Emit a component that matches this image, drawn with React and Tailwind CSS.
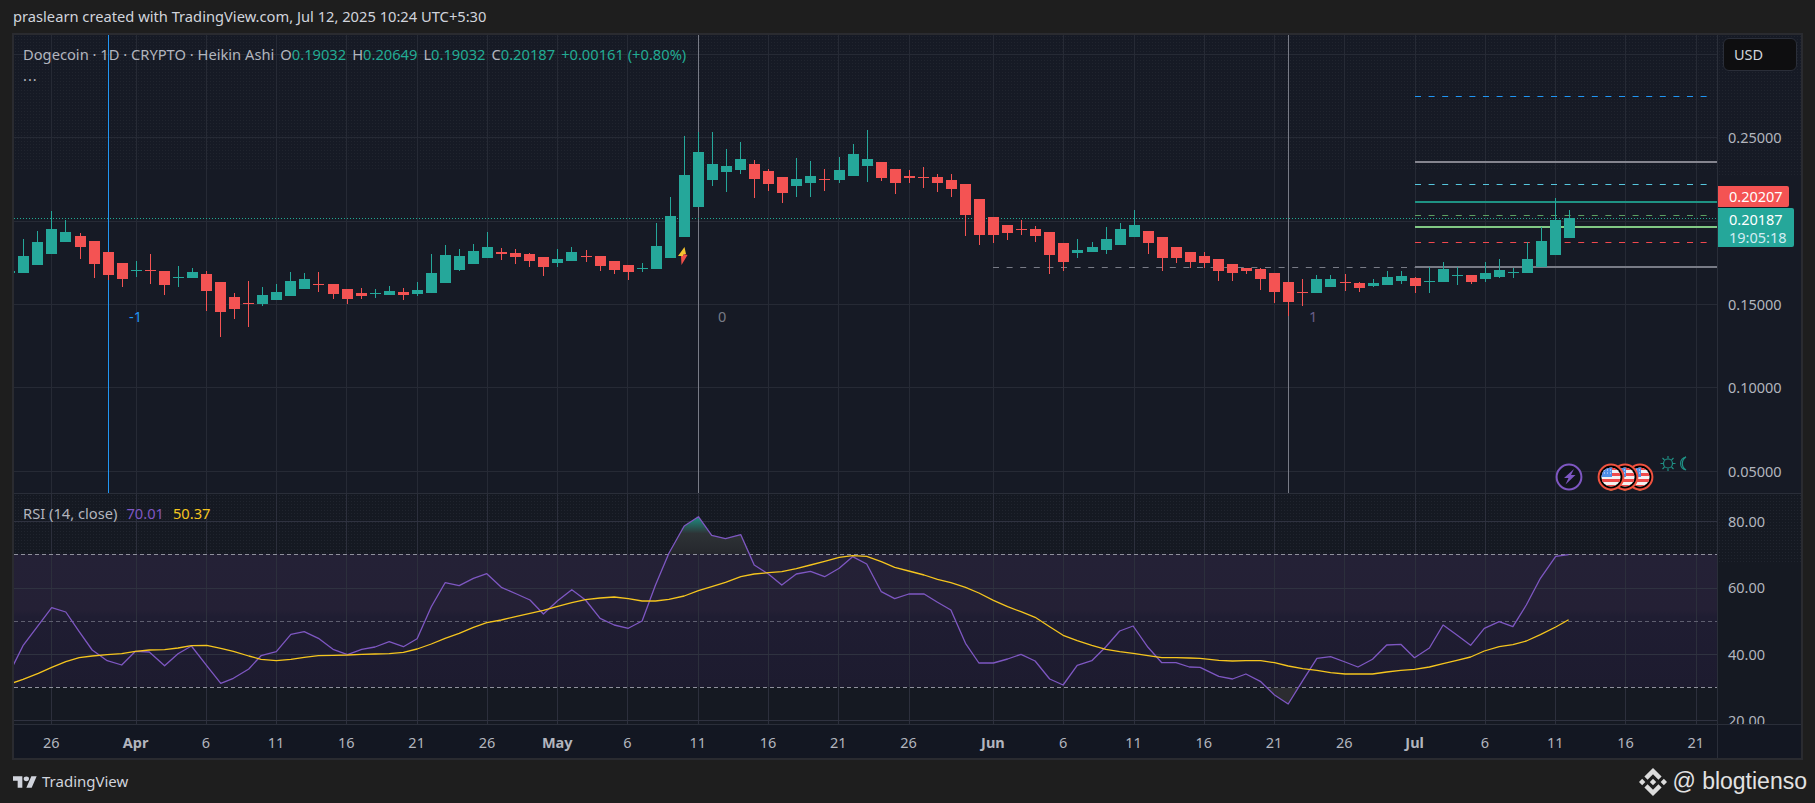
import React from 'react';

// candle rows read off the chart: [center, wickTop, bodyTop, bodyBottom, wickBottom, up]
const segments = [
  { x0: 0, y0: 200, rows: [
    [70,117,168,219,219,1],[112,93,126,195,195,1],[154,33,87,162,162,1],[196,60,96,126,126,1],[241,99,108,141,177,0],
    [283,123,123,192,234,0],[325,156,156,225,240,0],[367,189,189,237,261,0],[409,183,210,213,231,1],[451,162,210,213,252,0],
    [493,213,213,255,285,0],[535,198,231,234,261,1],[577,204,216,234,234,1],[619,213,222,273,333,0],[661,246,246,336,411,0],
    [703,279,291,327,357,0],[745,243,309,312,381,0],[787,261,285,312,318,1],[829,252,276,300,300,1],[871,216,243,288,288,1],
    [913,219,237,267,267,1],[955,216,252,255,276,0],[1000,252,252,282,297,0],[1042,267,267,297,312,0],[1084,264,279,288,297,0],
    [1126,267,279,282,294,1],[1168,258,273,285,285,1],[1210,264,276,285,300,0],[1252,246,270,282,288,1],[1294,162,219,279,279,1],
    [1336,135,165,249,249,1],[1378,147,168,210,213,1],[1420,132,153,192,192,1],[1462,96,141,174,174,1],
  ] },
  { x0: 500, y0: 120, rows: [
    [4,384,396,402,420,0],[46,387,399,411,432,0],[88,399,402,423,441,0],[130,411,411,441,468,0],[172,387,417,429,441,1],
    [214,381,396,423,423,1],[259,390,408,411,426,0],[301,408,408,438,453,0],[343,423,423,450,462,0],[385,435,435,456,480,0],
    [427,429,444,447,456,1],[469,309,378,447,447,1],[511,231,288,414,414,1],[553,48,165,351,351,1],[595,36,96,261,261,1],
    [637,36,132,180,198,1],[679,87,138,156,216,1],[721,66,117,150,162,1],[763,120,132,177,234,0],[805,147,153,192,213,0],
    [847,171,171,219,249,0],[889,114,177,198,231,1],[931,123,168,189,231,1],[973,147,177,180,213,0],[1018,111,150,180,189,1],
    [1060,72,102,168,168,1],[1102,30,117,138,186,1],[1144,126,126,174,183,0],[1186,147,147,189,222,0],[1228,150,168,174,189,0],
    [1270,141,171,174,204,0],[1312,162,171,189,216,0],[1354,162,180,207,231,0],[1396,192,192,285,348,0],[1438,237,237,345,375,0],
    [1480,291,291,345,369,0],
  ] },
  { x0: 1000, y0: 200, rows: [
    [22,75,75,99,120,0],[64,60,87,90,105,0],[106,78,87,108,126,0],[148,96,96,165,222,0],[190,129,129,186,213,0],
    [232,117,150,159,174,1],[277,126,141,156,156,1],[319,81,117,150,162,1],[361,69,87,135,135,1],[403,30,75,111,111,1],
    [445,93,93,129,162,0],[487,111,111,174,213,0],[529,141,141,174,189,0],[571,156,156,186,204,0],[613,156,168,189,204,0],
    [655,177,177,213,243,0],[697,192,192,219,243,0],[739,204,204,213,222,0],[781,204,207,237,270,0],[823,219,219,276,309,0],
    [865,246,246,306,348,0],[907,237,276,279,318,0],[949,225,237,279,279,1],[991,225,237,261,261,1],[1036,222,246,249,273,0],
    [1078,246,249,264,276,0],[1120,237,249,258,261,1],[1162,213,231,255,255,1],[1204,213,228,243,252,1],[1246,231,234,258,279,0],
  ] },
  { x0: 1400, y0: 0, rows: [
    [88,802,843,846,879,1],[130,786,807,846,846,1],[172,801,825,828,855,1],[214,825,825,846,852,0],[256,786,819,837,846,1],
    [298,777,810,831,834,1],[340,803,816,819,834,1],[382,727,777,819,819,1],[424,681,723,801,801,1],[466,594,660,765,765,1],
    [508,630,654,714,714,1],
  ] },
];

const candles = segments.flatMap((s) =>
  s.rows.map(([u, wt, bt, bb, wb, up]) => ({
    x: Math.round(s.x0 + u / 3 - 5.5),
    wickTop: Math.round(s.y0 + wt / 3),
    top: Math.round(s.y0 + bt / 3),
    bottom: Math.round(s.y0 + bb / 3),
    wickBottom: Math.round(s.y0 + wb / 3),
    color: up ? '#25a79a' : '#f45353',
  }))
);

const toPoints = (rows, x0, sx) => rows.map(([u, v]) => `${(x0 + u / sx).toFixed(1)},${(490 + v / 3).toFixed(1)}`).join(' ');

const rsiLine = [
  toPoints([[35,525],[60,467],[135,353],[172,366],[207,425],[241,480],[280,512],[318,525],[354,484],[390,486],[430,527],[465,491],[500,468],[540,527],[577,580],[610,565],[650,537],[682,497],[722,485],[760,433],[795,425],[832,445],[870,478],[908,494],[945,478],[980,471],[1017,455],[1054,470],[1090,446],[1127,350],[1163,278],[1200,287],[1237,265],[1272,251],[1310,292],[1350,312],[1385,330],[1420,372],[1457,332],[1494,299],[1530,330],[1568,385]], 0, 2.613),
  toPoints([[37,405],[74,415],[110,393],[145,285],[180,190],[220,108],[257,80],[292,136],[328,146],[368,134],[403,225],[440,252],[475,285],[513,252],[550,244],[587,260],[625,235],[660,200],[697,222],[735,305],[770,326],[807,312],[847,312],[882,337],[917,360],[955,460],[990,519],[1028,519],[1065,507],[1100,493],[1137,513],[1175,567],[1210,585],[1247,526],[1285,512],[1322,470],[1358,423],[1393,408],[1432,472],[1468,518],[1505,518],[1540,531],[1568,532]], 600, 2.613),
  toPoints([[48,559],[83,567],[117,552],[155,575],[190,615],[225,642],[262,572],[298,505],[333,500],[370,516],[403,531],[440,508],[476,465],[512,463],[547,503],[585,474],[620,405],[655,435],[690,466],[725,415],[763,395],[798,410],[832,345],[868,265],[907,199],[940,194]], 1200, 2.55),
].join(' ');

const rsiMa = [
  toPoints([[35,578],[60,568],[100,550],[135,532],[172,515],[207,503],[241,498],[280,494],[318,491],[354,484],[390,480],[430,479],[465,474],[500,467],[540,466],[577,475],[610,484],[650,498],[682,508],[722,512],[760,508],[795,502],[832,497],[870,496],[908,495],[945,493],[980,492],[1017,491],[1054,487],[1090,477],[1127,462],[1163,445],[1200,430],[1237,412],[1272,398],[1310,390],[1350,379],[1385,370],[1420,361],[1457,349],[1494,338],[1530,329],[1568,324]], 0, 2.613),
  toPoints([[37,321],[74,326],[110,333],[145,333],[180,328],[220,318],[257,302],[292,290],[328,277],[368,260],[403,252],[440,248],[475,245],[513,236],[550,225],[587,214],[625,202],[660,197],[697,199],[735,215],[770,232],[807,243],[847,255],[882,268],[917,278],[955,292],[990,309],[1028,331],[1065,350],[1100,365],[1137,382],[1175,410],[1210,436],[1247,452],[1285,466],[1322,478],[1358,485],[1393,490],[1432,497],[1468,503],[1505,503],[1540,504],[1568,505]], 600, 2.613),
  toPoints([[48,511],[83,513],[117,512],[155,512],[190,518],[225,528],[262,536],[298,541],[333,548],[370,552],[403,552],[440,552],[476,546],[512,541],[547,538],[585,531],[620,521],[655,511],[690,501],[725,483],[763,470],[798,464],[832,453],[868,434],[907,411],[940,389]], 1200, 2.55),
].join(' ');

const overbought = toPoints([[180,192],[220,108],[257,80],[292,136],[328,146],[368,134],[393,192]], 600, 2.613);
const oversold = toPoints([[172,593],[190,615],[225,642],[250,593]], 1200, 2.55);

const dayX = (d) => 51.2 + 14.056 * d;
const timeTicks = [
  [0, '26'], [6, 'Apr', 1], [11, '6'], [16, '11'], [21, '16'], [26, '21'], [31, '26'], [36, 'May', 1], [41, '6'], [46, '11'],
  [51, '16'], [56, '21'], [61, '26'], [67, 'Jun', 1], [72, '6'], [77, '11'], [82, '16'], [87, '21'], [92, '26'], [97, 'Jul', 1],
  [102, '6'], [107, '11'], [112, '16'], [117, '21'],
];
const gridX = timeTicks.map(([d]) => Math.round(dayX(d)) + 0.5);

const priceTicks = [[137.5, '0.25000'], [304.5, '0.15000'], [387.5, '0.10000'], [471.5, '0.05000']];
const rsiTicks = [[521.5, '80.00'], [588, '60.00'], [654.5, '40.00'], [720.5, '20.00']];

const levels = [
  { y: 96.5, color: '#2196f3', dash: '6 7.6' },
  { y: 162, color: '#85858f', w: 2 },
  { y: 184.5, color: '#56c6dd', dash: '6 7.6' },
  { y: 202, color: '#1f9384', w: 2 },
  { y: 215.5, color: '#5c9e62', dash: '6 7.6' },
  { y: 227, color: '#81c784', w: 2 },
  { y: 242.5, color: '#f0484e', dash: '6 7.6' },
  { y: 267, color: '#787b86', w: 2 },
];

const dots = "absolute inset-x-0 top-0 bg-[radial-gradient(circle,#20242e_0.6px,transparent_0.7px)] bg-[length:3px_3px]";

function Flag({ cx, id }) {
  return (
    <g>
      <rect x={cx - 1.5} y={487} width={3} height={4} fill="#a8683a" />
      <circle cx={cx} cy={477} r={12.4} fill="#000" stroke="#f0523f" strokeWidth={2} />
      <clipPath id={id}><circle cx={cx} cy={477} r={9.6} /></clipPath>
      <g clipPath={`url(#${id})`}>
        <rect x={cx - 10} y={467} width={20} height={20} fill="#f2f2f2" />
        <rect x={cx - 10} y={467} width={20} height={3} fill="#ef4b4b" />
        <rect x={cx - 10} y={473} width={20} height={3} fill="#ef4b4b" />
        <rect x={cx - 10} y={479} width={20} height={3} fill="#ef4b4b" />
        <rect x={cx - 10} y={485} width={20} height={2} fill="#ef4b4b" />
        <rect x={cx - 10} y={467} width={11} height={10} fill="#4f8fe8" />
        <path d={`M${cx - 7} 470h1M${cx - 4} 470h1M${cx - 1} 470h1M${cx - 7} 473h1M${cx - 4} 473h1M${cx - 1} 473h1`} stroke="#dfeaff" strokeWidth={1} />
      </g>
    </g>
  );
}

function MainChart() {
  return (
    <svg viewBox="14 35 1703 458" className="absolute inset-0 w-full h-full">
      {gridX.map((x) => <line key={x} x1={x} x2={x} y1={35} y2={493} stroke="#262a35" />)}
      {[54.5, 137.5, 221.5, 304.5, 387.5, 471.5].map((y) => <line key={y} x1={14} x2={1717} y1={y} y2={y} stroke="#262a35" />)}

      <line x1={108.5} x2={108.5} y1={35} y2={493} stroke="#2196f3" />
      <line x1={698.5} x2={698.5} y1={35} y2={493} stroke="#787b86" />
      <line x1={1288.5} x2={1288.5} y1={35} y2={493} stroke="#787b86" />

      <line x1={14} x2={1717} y1={218.5} y2={218.5} stroke="#22ab94" strokeDasharray="1 2" />
      <line x1={993} x2={1415} y1={267.5} y2={267.5} stroke="#787b86" strokeDasharray="6 7.6" />
      {levels.map((l) => (
        <line key={l.y} x1={1415} x2={l.dash ? 1710 : 1717} y1={l.y} y2={l.y} stroke={l.color} strokeWidth={l.w || 1} strokeDasharray={l.dash} />
      ))}

      <g shapeRendering="crispEdges">
        <rect x={14} y={271} width={1} height={2} fill="#25a79a" />
        {candles.map((c) => (
          <g key={c.x} fill={c.color}>
            <rect x={c.x + 5} y={c.wickTop} width={1} height={c.wickBottom - c.wickTop} />
            <rect x={c.x} y={c.top} width={11} height={Math.max(c.bottom - c.top, 1)} />
          </g>
        ))}
      </g>

      <polygon points="684.5,247 678,256 683,256 684,254 686,254" fill="#f4c430" />
      <polygon points="678,256 681,256 681.5,265 687.5,255 684,254 683,256" fill="#f0504a" />

      <circle cx={1569} cy={477} r={12.4} fill="#11141c" stroke="#7e57c2" strokeWidth={2} />
      <path d="M1574 469l-10 9h4.500l-3 6.500 10-9.500h-4.500z" fill="#7e57c2" />

      <Flag cx={1640} id="flag-c" />
      <Flag cx={1625} id="flag-b" />
      <Flag cx={1611} id="flag-a" />

      <g stroke="#1f8f84" fill="none" strokeWidth={1.2}>
        <circle cx={1668} cy={463.500} r={4.500} />
        <path d="M1668 456v2.500M1668 468.500v2.500M1660.500 463.500h2.500M1673 463.500h2.500M1662.500 458l2 2M1671.500 467l2 2M1662.500 469l2-2M1671.500 460l2-2" />
        <path d="M1686 457a6.600 6.600 0 0 0 0 13a7.600 7.600 0 0 1 0-13z" />
      </g>
    </svg>
  );
}

function RsiChart() {
  return (
    <svg viewBox="14 494 1703 230" className="absolute inset-0 w-full h-full">
      <defs>
        <linearGradient id="band" x1="0" x2="0" y1="0" y2="1">
          <stop offset="0" stopColor="#242136" />
          <stop offset="0.42" stopColor="#242035" />
          <stop offset="0.47" stopColor="#1f1d32" />
          <stop offset="1" stopColor="#1d1b2f" />
        </linearGradient>
        <linearGradient id="peak" x1="0" x2="0" y1="0" y2="1">
          <stop offset="0" stopColor="#1d8f82" />
          <stop offset="0.45" stopColor="#2e3336" />
          <stop offset="1" stopColor="#25272d" />
        </linearGradient>
      </defs>
      <rect x={14} y={554} width={1703} height={133} fill="url(#band)" />
      {gridX.map((x) => <line key={x} x1={x} x2={x} y1={494} y2={724} stroke="#2c2f3c" />)}
      {[521.5, 588.5, 654.5, 720.5].map((y) => <line key={y} x1={14} x2={1717} y1={y} y2={y} stroke="#2f3240" />)}
      {[554.5, 621.5, 687.5].map((y) => (
        <line key={y} x1={14} x2={1717} y1={y} y2={y} stroke={y === 621.5 ? '#5f5f70' : '#8f909c'} strokeDasharray="4 3" />
      ))}
      <polygon points={overbought} fill="url(#peak)" />
      <polygon points={oversold} fill="#2b2c30" />
      <polyline points={rsiLine} fill="none" stroke="#7e57c2" strokeWidth={1.3} strokeLinejoin="round" />
      <polyline points={rsiMa} fill="none" stroke="#f5c51e" strokeWidth={1.3} strokeLinejoin="round" />
    </svg>
  );
}

function TvLogo() {
  return (
    <svg viewBox="0 0 36 24" className="w-[24px] h-[14px]" fill="#d1d4dc" preserveAspectRatio="none">
      <path d="M14 22H7V10H0V2h14v20zM28 22h-8l7.500-20h8L28 22z" />
      <circle cx="20" cy="6.500" r="4" />
    </svg>
  );
}

function BinanceLogo() {
  return (
    <svg viewBox="0 0 126.61 126.61" className="w-[28px] h-[28px]" fill="#dcdcdc">
      <path d="M38.73 53.2l24.59-24.58 24.6 24.6 14.3-14.31L63.32 0 24.42 38.9zM0 63.31l14.3-14.31 14.31 14.31-14.31 14.3zM38.73 73.41l24.59 24.59 24.6-24.6 14.31 14.29-38.9 38.91-38.91-38.88-.02-.02zM98 63.31l14.3-14.31 14.31 14.3-14.31 14.32zM77.83 63.3L63.32 48.78 52.59 59.51l-1.24 1.23-2.54 2.54 14.51 14.5 14.51-14.47z" />
    </svg>
  );
}

export default function App() {
  return (
    <div className="w-[1815px] h-[803px] flex flex-col bg-[#1e1e1e] overflow-hidden text-[#b2b5be] [font-family:'Noto_Sans',sans-serif] text-[14.5px]">
      <div className="h-[33px] pl-[13px] flex items-center text-[#d1d4dc] text-[14.7px]">
        praslearn created with TradingView.com, Jul 12, 2025 10:24 UTC+5:30
      </div>

      <div className="ml-3 w-[1791px] h-[727px] border-2 border-[#2a2b30] flex flex-col bg-[#161a25]">
        <div className="flex h-[458px]">
          <div className="relative w-[1703px]">
            <div className={`${dots} h-[135px]`} />
            <MainChart />
            <div className="absolute left-[9px] top-[8px] flex items-center gap-[6px] whitespace-nowrap text-[14.700px]">
              <span>Dogecoin · 1D · CRYPTO · Heikin Ashi</span>
              <span>O<span className="text-[#22ab94]">0.19032</span></span>
              <span>H<span className="text-[#22ab94]">0.20649</span></span>
              <span>L<span className="text-[#22ab94]">0.19032</span></span>
              <span>C<span className="text-[#22ab94]">0.20187</span></span>
              <span className="text-[#22ab94]">+0.00161 (+0.80%)</span>
            </div>
            <div className="absolute left-[9px] top-[30px] tracking-[1px] text-[#b2b5be]">...</div>
            <span className="absolute left-[115px] top-[271px] text-[#2196f3]">-1</span>
            <span className="absolute left-[704px] top-[271px] text-[#787b86]">0</span>
            <span className="absolute left-[1295px] top-[271px] text-[#6a5f8a]">1</span>
          </div>
          <div className="relative flex-1 border-l border-[#2a2e39]">
            <div className={`${dots} h-[140px]`} />
            <div className="absolute left-[5px] top-[3px] w-[74px] h-[33px] pl-[10px] flex items-center bg-[#0e0e10] border border-[#2a2e39] rounded-md text-[#d1d4dc]">USD</div>
            {priceTicks.map(([y, label]) => (
              <span key={label} className="absolute left-[10px] -translate-y-1/2" style={{ top: y - 35 }}>{label}</span>
            ))}
            <div className="absolute left-0 top-[151px] w-[71px] h-[21px] pl-[11px] flex items-center bg-[#f45353] text-white rounded-r-[2px]">0.20207</div>
            <div className="absolute left-0 top-[173px] w-[76px] h-[39px] pl-[11px] flex flex-col justify-center leading-[18px] bg-[#25a79a] text-white rounded-r-[2px]">
              <span>0.20187</span>
              <span className="text-[#d2ecf2]">19:05:18</span>
            </div>
          </div>
        </div>

        <div className="flex h-[231px] border-t border-[#2a2e39] bg-[#151922]">
          <div className="relative w-[1703px]">
            <div className={`${dots} h-[60px]`} />
            <RsiChart />
            <div className="absolute left-[9px] top-[8px] flex items-center gap-[9px] whitespace-nowrap text-[14.700px]">
              <span>RSI (14, close)</span>
              <span className="text-[#7e57c2]">70.01</span>
              <span className="text-[#f5c51e]">50.37</span>
            </div>
          </div>
          <div className="relative flex-1 border-l border-[#2a2e39] overflow-hidden">
            <div className={`${dots} h-[70px]`} />
            {rsiTicks.map(([y, label]) => (
              <span key={label} className="absolute left-[10px] -translate-y-1/2" style={{ top: y - 494 }}>{label}</span>
            ))}
          </div>
        </div>

        <div className="flex flex-1 border-t border-[#2a2e39] bg-[#131722]">
          <div className="relative w-[1703px]">
            {timeTicks.map(([d, label, month]) => (
              <span
                key={d}
                className={`absolute top-[7px] -translate-x-1/2 ${month ? 'font-bold' : ''}`}
                style={{ left: dayX(d) - 14 }}
              >
                {label}
              </span>
            ))}
          </div>
          <div className="flex-1 border-l border-[#2a2e39]" />
        </div>
      </div>

      <div className="flex-1 pl-[13px] pr-2 flex items-center justify-between">
        <div className="flex items-center gap-[5px] text-[#d1d4dc] text-[15px]">
          <TvLogo />
          <span>TradingView</span>
        </div>
        <div className="flex items-center gap-[5px] text-[#e2e2e2] text-[23px] [font-family:'Liberation_Sans',sans-serif]">
          <BinanceLogo />
          <span>@ blogtienso</span>
        </div>
      </div>
    </div>
  );
}
